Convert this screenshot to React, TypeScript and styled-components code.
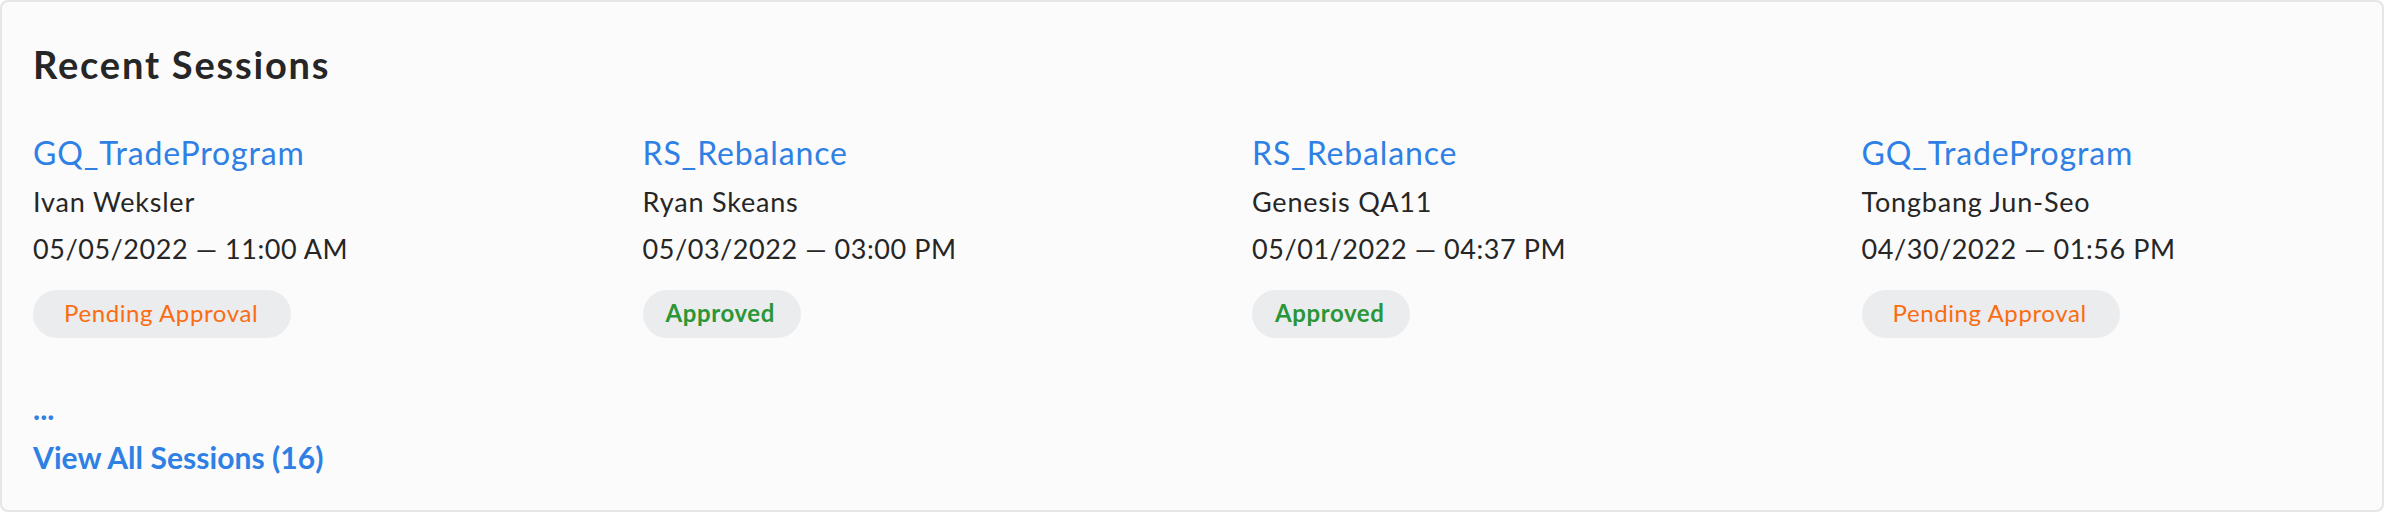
import React from "react";
import styled, { createGlobalStyle } from "styled-components";

const GlobalStyle = createGlobalStyle`
  html, body {
    margin: 0;
    padding: 0;
    background: #ffffff;
  }
  body {
    font-family: "Nunito Sans", Lato, "Open Sans", sans-serif;
  }
`;

const Card = styled.section`
  box-sizing: border-box;
  width: 2384px;
  height: 512px;
  background: #fbfbfb;
  border: 2px solid #e5e5e5;
  border-radius: 8px;
  padding: 40px 31px 0 31px;
  display: flex;
  flex-direction: column;
  font-family: Lato, "Open Sans", sans-serif;
  line-height: 1.2;
`;

const Title = styled.h2`
  margin: 0 0 46px 0;
  font-size: 38px;
  font-weight: 700;
  letter-spacing: 1.8px;
  color: #262626;
`;

const Grid = styled.div`
  display: grid;
  grid-template-columns: repeat(4, 1fr);
  column-gap: 120px;
`;

const Session = styled.div`
  display: flex;
  flex-direction: column;
  align-items: flex-start;
`;

const SessionLink = styled.a`
  font-size: 32px;
  letter-spacing: 0.85px;
  color: #2f80e4;
  text-decoration: none;
  cursor: pointer;
`;

const Meta = styled.div<{ $gap: number; $spacing: number }>`
  margin-top: ${(p) => p.$gap}px;
  font-size: 27px;
  letter-spacing: ${(p) => p.$spacing}px;
  color: #262626;
`;

const Badge = styled.span<{ $status: "pending" | "approved" }>`
  margin-top: 24px;
  box-sizing: border-box;
  height: 48px;
  display: inline-flex;
  align-items: center;
  border-radius: 24px;
  background: #ebecee;
  font-size: 24px;
  letter-spacing: 0.6px;
  padding: ${(p) => (p.$status === "pending" ? "0 33px 0 31px" : "0 26px 0 23px")};
  font-weight: ${(p) => (p.$status === "pending" ? 400 : 700)};
  color: ${(p) => (p.$status === "pending" ? "#fb6c12" : "#2a9637")};
`;

const Footer = styled.div`
  margin-top: 52px;
  display: flex;
  flex-direction: column;
  align-items: flex-start;
  gap: 13px;
`;

const FooterLink = styled.a`
  font-size: 30px;
  font-weight: 700;
  letter-spacing: 0.05px;
  color: #2f80e4;
  text-decoration: none;
  cursor: pointer;
`;

type Status = "pending" | "approved";

const sessions: { program: string; user: string; date: string; status: Status }[] = [
  { program: "GQ_TradeProgram", user: "Ivan Weksler", date: "05/05/2022 — 11:00 AM", status: "pending" },
  { program: "RS_Rebalance", user: "Ryan Skeans", date: "05/03/2022 — 03:00 PM", status: "approved" },
  { program: "RS_Rebalance", user: "Genesis QA11", date: "05/01/2022 — 04:37 PM", status: "approved" },
  { program: "GQ_TradeProgram", user: "Tongbang Jun-Seo", date: "04/30/2022 — 01:56 PM", status: "pending" },
];

export default function App() {
  return (
    <>
      <GlobalStyle />
      <Card>
        <Title>Recent Sessions</Title>
        <Grid>
          {sessions.map((s, i) => (
            <Session key={i}>
              <SessionLink>{s.program}</SessionLink>
              <Meta $gap={14} $spacing={0.8}>{s.user}</Meta>
              <Meta $gap={15} $spacing={0.55}>{s.date}</Meta>
              <Badge $status={s.status}>
                {s.status === "pending" ? "Pending Approval" : "Approved"}
              </Badge>
            </Session>
          ))}
        </Grid>
        <Footer>
          <FooterLink>...</FooterLink>
          <FooterLink>View All Sessions (16)</FooterLink>
        </Footer>
      </Card>
    </>
  );
}
